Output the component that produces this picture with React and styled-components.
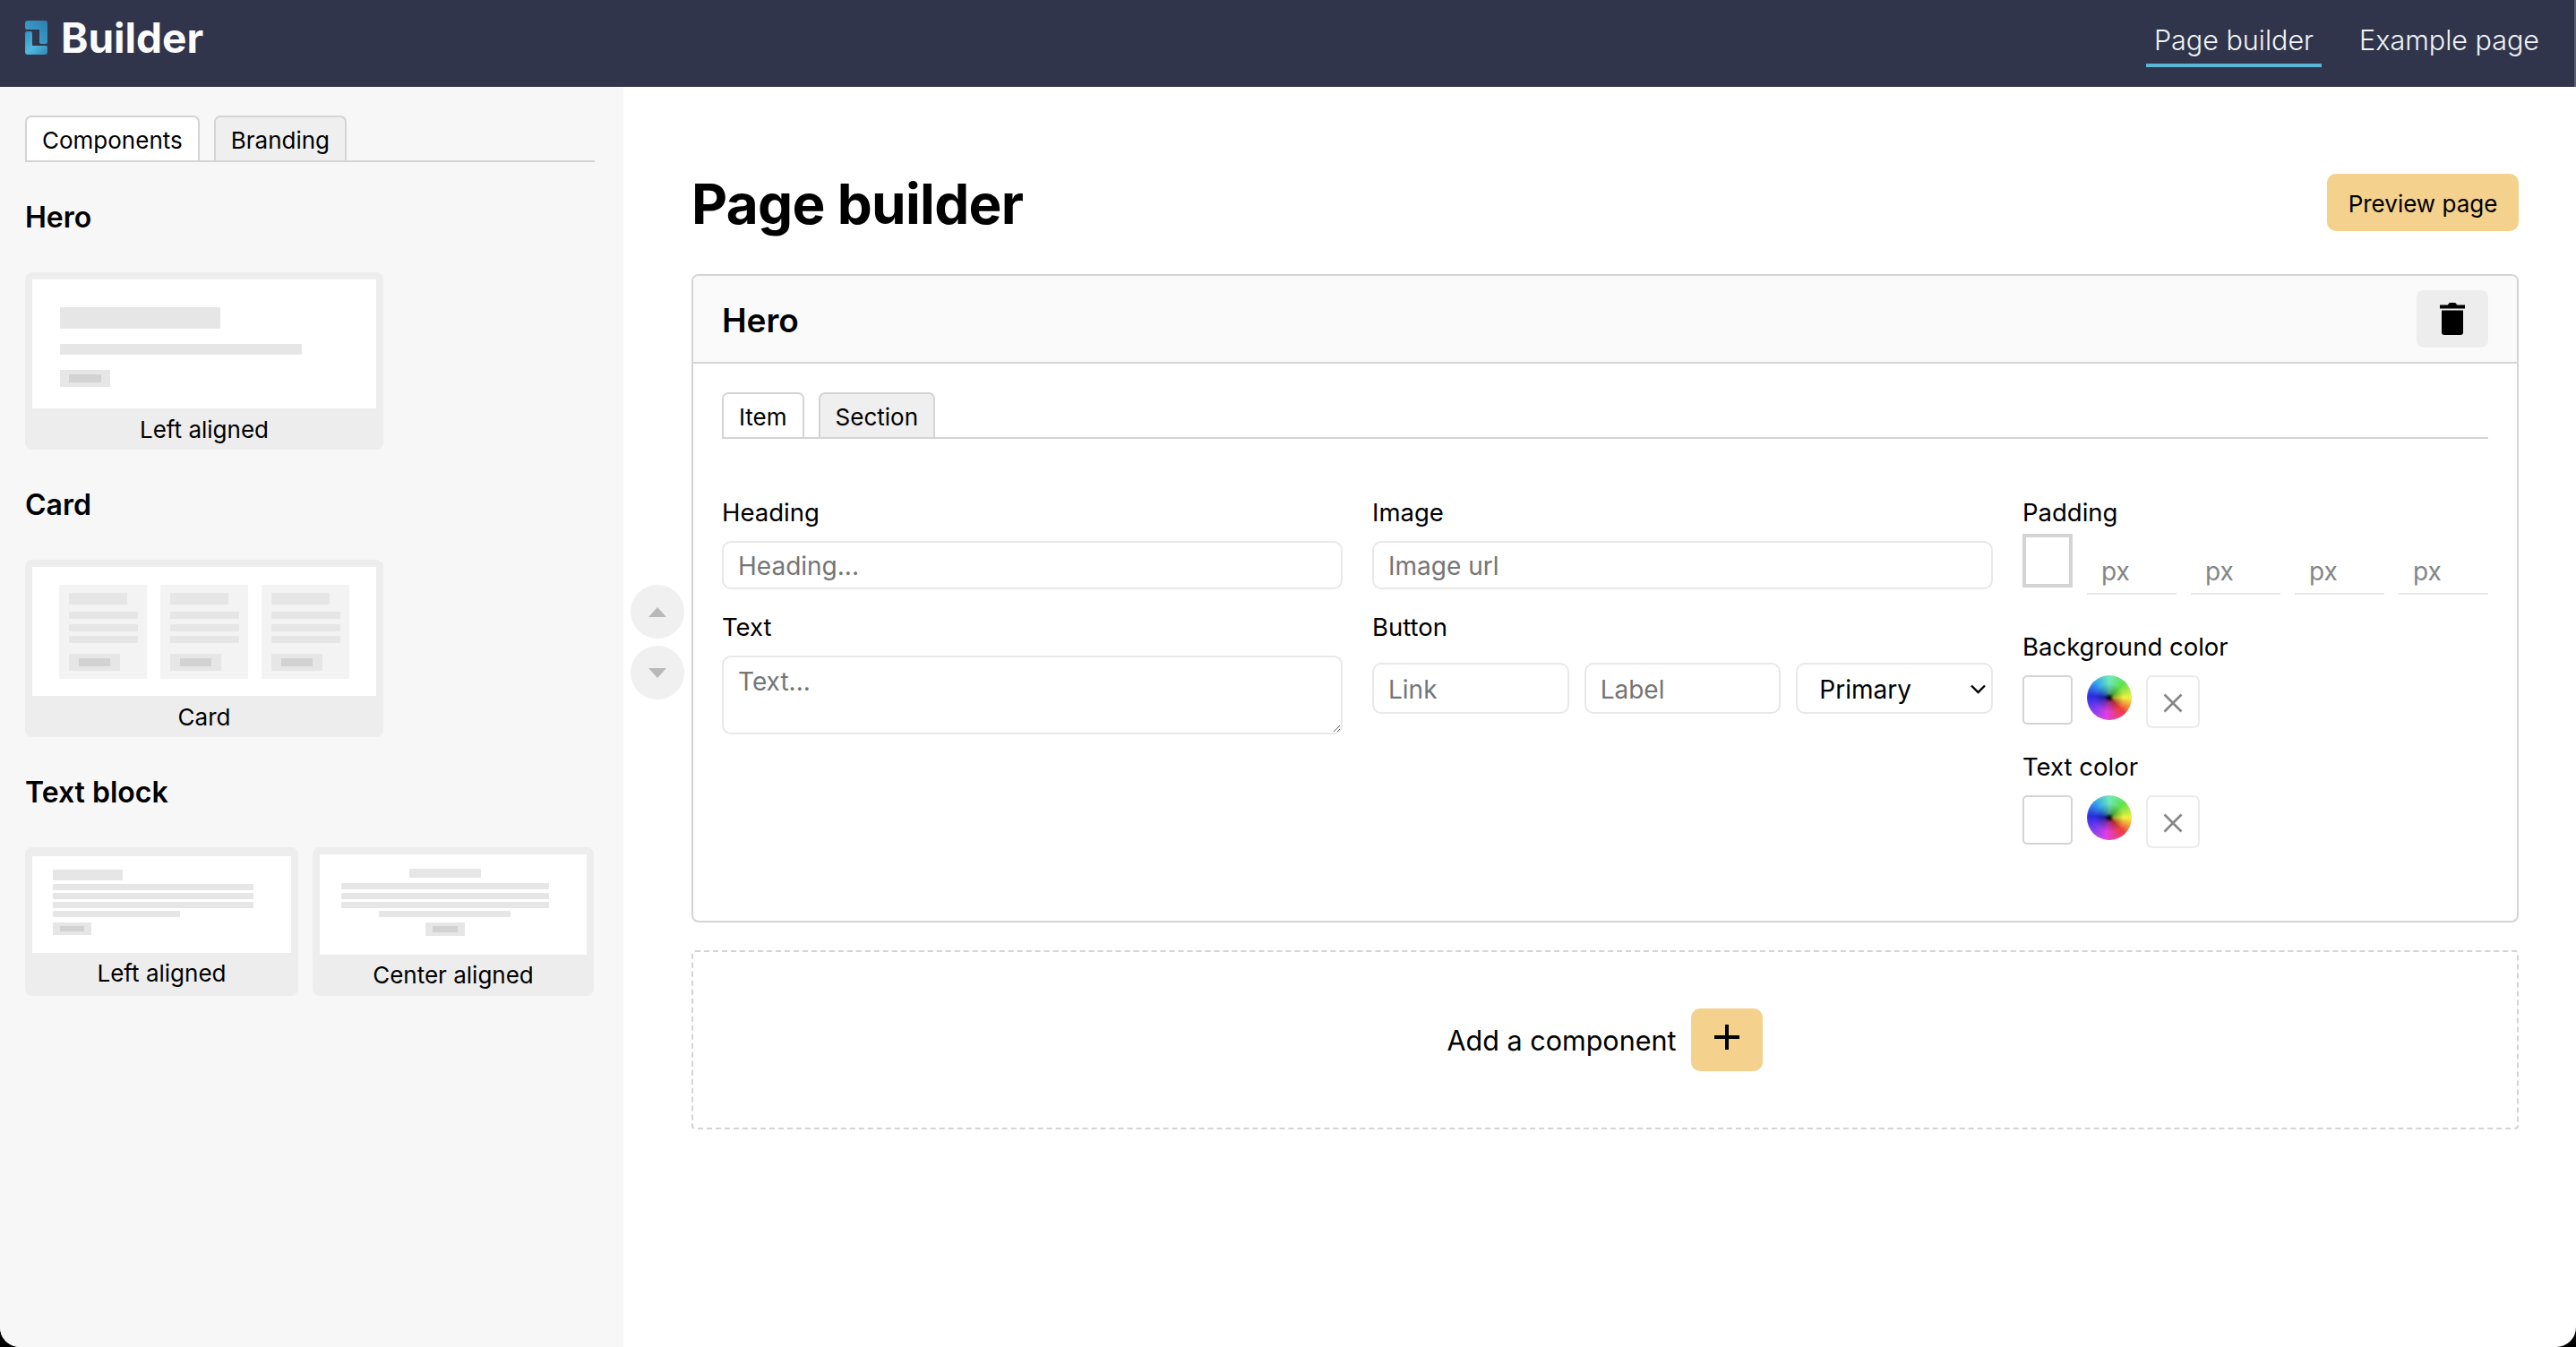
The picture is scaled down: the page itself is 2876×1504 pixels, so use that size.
import React from 'react';
import styled, { createGlobalStyle } from 'styled-components';

const Global = createGlobalStyle`
  html, body { margin: 0; padding: 0; background: #000; height: 100%; overflow: hidden; }
  * { box-sizing: border-box; }
  body { font-family: Inter, "Liberation Sans", sans-serif; font-size: 28px; color: #000; }
`;

const Page = styled.div`
  height: 100vh;
  display: flex;
  flex-direction: column;
  background: #fff;
  border-radius: 0 0 22px 22px;
  overflow: hidden;
`;
const Header = styled.header`
  height: 97px;
  flex: none;
  display: flex;
  justify-content: space-between;
  align-items: flex-start;
  background: #30354b;
  border-right: 2px solid #5c6072;
  padding: 20px 30px 0 28px;
`;
const Brand = styled.div`
  display: flex;
  align-items: center;
  gap: 15px;
  height: 38px;
  margin-top: 3px;
  color: #fbfbfc;
  font-size: 46px;
  font-weight: 700;
  line-height: 38px;
`;
const Nav = styled.nav`
  display: flex;
  gap: 33px;
`;
const NavItem = styled.a`
  height: 55px;
  padding: 0 9px;
  line-height: 50px;
  font-size: 30.5px;
  font-weight: 300;
  color: #f1f5f9;
  border-bottom: 4px solid ${p => (p.$active ? '#5ab7d8' : 'transparent')};
`;
const Body = styled.div`
  flex: 1;
  display: flex;
  min-height: 0;
`;
const Sidebar = styled.aside`
  width: 696px;
  flex: none;
  background: #f7f7f7;
  padding: 32px 32px 0 28px;
`;
const Tabs = styled.div`
  display: flex;
  gap: 16px;
  height: 52px;
  border-bottom: 2px solid #d4d4d4;
`;
const Tab = styled.div`
  height: 50px;
  padding: 2px 17px 0;
  display: flex;
  align-items: center;
  font-size: 26px;
  background: ${p => (p.$active ? '#fff' : '#efefef')};
  border: 2px solid #d4d4d4;
  border-bottom: 0;
  border-radius: 7px 7px 0 0;
`;
const GroupTitle = styled.h3`
  margin: 42px 0 41px;
  font-size: 32px;
  font-weight: 600;
  line-height: 40px;
`;
const CardRow = styled.div`
  display: flex;
  gap: 16px;
`;
const TemplateCard = styled.div`
  width: ${p => p.$w}px;
  height: ${p => p.$h || 198}px;
  flex: none;
  background: #ededed;
  border-radius: 8px;
  padding: ${p => p.$top || 8}px 8px 0;
  display: flex;
  flex-direction: column;
`;
const Preview = styled.div`
  height: ${p => p.$h}px;
  flex: none;
  background: #fff;
  display: flex;
  flex-direction: ${p => (p.$row ? 'row' : 'column')};
  align-items: ${p => (p.$center ? 'center' : 'flex-start')};
  gap: ${p => (p.$row ? '15px' : '0')};
  padding: ${p => p.$pad};
`;
const TemplateLabel = styled.div`
  flex: 1;
  display: flex;
  align-items: center;
  justify-content: center;
  font-size: 26px;
  padding-bottom: ${p => p.$nudge || 0}px;
`;
const Bar = styled.div`
  width: ${p => p.$w}px;
  height: ${p => p.$h}px;
  margin-top: ${p => p.$mt || 0}px;
  flex: none;
  background: #e6e6e6;
  border-radius: 1px;
`;
const SkelButton = styled.div`
  width: ${p => p.$w}px;
  height: ${p => p.$h}px;
  margin-top: ${p => p.$mt || 0}px;
  flex: none;
  background: #e6e6e6;
  display: flex;
  align-items: center;
  justify-content: center;
`;
const SkelInner = styled.div`
  width: ${p => p.$w}px;
  height: ${p => p.$h}px;
  background: #d2d2d2;
`;
const MiniCard = styled.div`
  width: 98px;
  height: 105px;
  background: #f3f3f3;
  padding: 9px 11px 0;
`;
const Main = styled.main`
  flex: 1;
  min-width: 0;
  display: flex;
  gap: 8px;
  padding: 97px 64px 0 8px;
`;
const Mover = styled.div`
  width: 60px;
  flex: none;
  margin-top: 459px;
  display: flex;
  flex-direction: column;
  gap: 8px;
`;
const MoveButton = styled.div`
  width: 60px;
  height: 60px;
  border-radius: 50%;
  background: #f0f0f0;
  display: flex;
  align-items: center;
  justify-content: center;
`;
const Content = styled.div`
  flex: 1;
  min-width: 0;
`;
const TitleRow = styled.div`
  height: 64px;
  margin-bottom: 48px;
  display: flex;
  justify-content: space-between;
  align-items: center;
`;
const Title = styled.h1`
  margin: 3px 0 0 0;
  font-size: 62px;
  line-height: 64px;
  font-weight: 700;
  letter-spacing: -0.7px;
`;
const PreviewButton = styled.div`
  width: 214px;
  height: 64px;
  padding-top: 2px;
  border-radius: 10px;
  background: #f4d28e;
  display: flex;
  align-items: center;
  justify-content: center;
  font-size: 26px;
`;
const Panel = styled.section`
  border: 2px solid #d4d4d4;
  border-radius: 8px;
  overflow: hidden;
`;
const PanelHeader = styled.div`
  height: 98px;
  padding: 0 32px;
  display: flex;
  justify-content: space-between;
  align-items: center;
  background: #fafafa;
  border-bottom: 2px solid #d4d4d4;
`;
const PanelTitle = styled.h2`
  margin: 2px 0 0;
  font-size: 37px;
  font-weight: 600;
`;
const DeleteButton = styled.div`
  width: 80px;
  height: 64px;
  border-radius: 8px;
  background: #ededed;
  display: flex;
  align-items: center;
  justify-content: center;
`;
const PanelBody = styled.div`
  padding: 32px;
`;
const FormGrid = styled.div`
  display: grid;
  grid-template-columns: 1fr 1fr 520px;
  column-gap: 33px;
  padding: 65px 0 49px;
`;
const Column = styled.div`
  display: flex;
  flex-direction: column;
`;
const FieldLabel = styled.label`
  display: block;
  height: 34px;
  line-height: 34px;
  font-size: 27.5px;
  margin-top: ${p => p.$mt || 0}px;
  margin-bottom: 15px;
`;
const TextInput = styled.input`
  width: 100%;
  min-width: 0;
  height: ${p => p.$h || 54}px;
  padding: 2px 16px 0;
  border: 2px solid #e8e8e8;
  border-radius: 10px;
  outline: 0;
  background: #fff;
  font: 400 28px Inter, "Liberation Sans", sans-serif;
  &::placeholder { color: #757575; opacity: 1; }
`;
const TextArea = styled.textarea`
  display: block;
  width: 100%;
  height: 88px;
  padding: 10px 16px;
  border: 2px solid #e8e8e8;
  border-radius: 10px;
  outline: 0;
  resize: vertical;
  font: 400 28px Inter, "Liberation Sans", sans-serif;
  &::placeholder { color: #757575; opacity: 1; }
`;
const ButtonFields = styled.div`
  display: grid;
  grid-template-columns: repeat(3, 1fr);
  gap: 17px;
  margin-top: 8px;
`;
const SelectWrap = styled.div`
  position: relative;
`;
const Select = styled.select`
  appearance: none;
  width: 100%;
  height: 57px;
  padding: 2px 24px 0;
  border: 2px solid #e8e8e8;
  border-radius: 10px;
  background: #fff;
  color: #000;
  font: 400 28px Inter, "Liberation Sans", sans-serif;
`;
const Chevron = styled.svg`
  position: absolute;
  right: 8px;
  top: 24px;
`;
const PaddingRow = styled.div`
  display: flex;
  align-items: flex-end;
  gap: 16px;
  height: 68px;
  margin-top: -8px;
`;
const PaddingBox = styled.div`
  width: 56px;
  height: 60px;
  flex: none;
  margin-bottom: 8px;
  border: 4px solid #d4d4d4;
`;
const PxInput = styled.input`
  flex: 1;
  min-width: 0;
  height: 50px;
  padding: 0 16px;
  border: 0;
  border-bottom: 2px solid #e8e8e8;
  outline: 0;
  background: transparent;
  font: 400 28px Inter, "Liberation Sans", sans-serif;
  &::placeholder { color: #858585; opacity: 1; }
`;
const ColorRow = styled.div`
  display: flex;
  align-items: flex-start;
  gap: 16px;
`;
const Swatch = styled.div`
  width: 56px;
  height: 55px;
  border: 2px solid #d4d4d4;
  border-radius: 5px;
  background: #fff;
`;
const Wheel = styled.div`
  width: 50px;
  height: 50px;
  border-radius: 50%;
  background:
    radial-gradient(circle, #000 0, rgba(0, 0, 0, 0.3) 15%, rgba(0, 0, 0, 0) 45%),
    radial-gradient(circle, rgba(255, 255, 255, 0) 60%, rgba(255, 255, 255, 0.2) 100%),
    conic-gradient(#6fe9b8 0deg, #5fe04a 45deg, #f2f23c 90deg, #ee3c3c 135deg, #e23ee2 190deg, #7a3cf0 235deg, #2a2adf 275deg, #35a8ea 320deg, #6fe9b8 360deg);
`;
const ClearButton = styled.div`
  width: 60px;
  height: 59px;
  border: 2px solid #ebebeb;
  border-radius: 7px;
  display: flex;
  align-items: center;
  justify-content: center;
`;
const AddBox = styled.div`
  height: 200px;
  margin-top: 31px;
  border: 2px dashed #d4d4d4;
  border-radius: 4px;
  display: flex;
  align-items: center;
  justify-content: center;
  gap: 17px;
  font-size: 30.5px;
`;
const AddButton = styled.div`
  width: 80px;
  height: 70px;
  border-radius: 10px;
  background: #f4d28e;
  display: flex;
  justify-content: center;
  padding-top: 17px;
`;

const Logo = () => (
  <svg width="25" height="38" viewBox="0 0 25 38">
    <defs>
      <linearGradient id="lg1" x1="1" y1="0" x2="0" y2="1">
        <stop offset="0" stopColor="#2a7fb0" />
        <stop offset="1" stopColor="#46a9d4" />
      </linearGradient>
      <linearGradient id="lg2" x1="0" y1="0" x2="1" y2="1">
        <stop offset="0" stopColor="#2f8fc0" />
        <stop offset="0.5" stopColor="#52b8dc" />
        <stop offset="1" stopColor="#2f88b8" />
      </linearGradient>
    </defs>
    <path d="M3 0H22a3 3 0 0 1 3 3V24a2 2 0 0 1-2 2H18a2 2 0 0 1-2-2V10H2a2 2 0 0 1-2-2V3a3 3 0 0 1 3-3Z" fill="url(#lg1)" />
    <path d="M2 12H6a2 2 0 0 1 2 2V28H23a2 2 0 0 1 2 2V35a3 3 0 0 1-3 3H3a3 3 0 0 1-3-3V14a2 2 0 0 1 2-2Z" fill="url(#lg2)" />
  </svg>
);
const TrashIcon = () => (
  <svg width="28" height="36" viewBox="0 0 28 36">
    <path d="M9 2.5C9.5 .8 10.5 0 12 0H16C17.5 0 18.5 .8 19 2.5H28V6.5H0V2.5Z" fill="#000" />
    <path d="M2 8.5H26V33a3 3 0 0 1-3 3H5a3 3 0 0 1-3-3Z" fill="#000" />
  </svg>
);
const Triangle = ({ down }) => (
  <svg width="20" height="11" viewBox="0 0 20 11">
    <path d={down ? 'M0 0H20L10 11Z' : 'M10 0L20 11H0Z'} fill="#b9b9b9" />
  </svg>
);
const XIcon = () => (
  <svg width="22" height="22" viewBox="0 0 22 22" style={{ marginTop: 2 }}>
    <path d="M1.5 1.5L20.5 20.5M20.5 1.5L1.5 20.5" stroke="#858585" strokeWidth="2.6" fill="none" />
  </svg>
);
const PlusIcon = () => (
  <svg width="30" height="30" viewBox="0 0 30 30">
    <path d="M15 1V29M1 15H29" stroke="#000" strokeWidth="4" fill="none" />
  </svg>
);

const HeroPreview = () => (
  <Preview $h={144} $pad="31px 0 0 31px">
    <Bar $w={179} $h={24} />
    <Bar $w={270} $h={12} $mt={17} />
    <SkelButton $w={56} $h={19} $mt={17}><SkelInner $w={36} $h={9} /></SkelButton>
  </Preview>
);
const Mini = () => (
  <MiniCard>
    <Bar $w={65} $h={13} />
    <Bar $w={77} $h={8} $mt={8} />
    <Bar $w={77} $h={8} $mt={6} />
    <Bar $w={77} $h={8} $mt={5} />
    <SkelButton $w={57} $h={19} $mt={12}><SkelInner $w={35} $h={9} /></SkelButton>
  </MiniCard>
);
const CardPreview = () => (
  <Preview $h={144} $row $pad="20px 0 0 30px">
    <Mini /><Mini /><Mini />
  </Preview>
);
const TextLeft = () => (
  <Preview $h={108} $pad="15px 0 0 23px">
    <Bar $w={78} $h={12} />
    <Bar $w={224} $h={7} $mt={4} />
    <Bar $w={224} $h={7} $mt={3} />
    <Bar $w={224} $h={7} $mt={3} />
    <Bar $w={142} $h={7} $mt={3} />
    <SkelButton $w={43} $h={14} $mt={6}><SkelInner $w={27} $h={6} /></SkelButton>
  </Preview>
);
const TextCenter = () => (
  <Preview $h={112} $center $pad="16px 19px 0 0">
    <Bar $w={80} $h={10} />
    <Bar $w={232} $h={7} $mt={6} />
    <Bar $w={232} $h={7} $mt={4} />
    <Bar $w={232} $h={7} $mt={3} />
    <Bar $w={147} $h={7} $mt={3} />
    <SkelButton $w={44} $h={15} $mt={6}><SkelInner $w={28} $h={7} /></SkelButton>
  </Preview>
);

const ColorField = ({ label, mt }) => (
  <>
    <FieldLabel $mt={mt}>{label}</FieldLabel>
    <ColorRow>
      <Swatch />
      <Wheel />
      <ClearButton><XIcon /></ClearButton>
    </ColorRow>
  </>
);

export default function App() {
  return (
    <>
      <Global />
      <Page>
        <Header>
          <Brand><Logo />Builder</Brand>
          <Nav>
            <NavItem $active>Page builder</NavItem>
            <NavItem>Example page</NavItem>
          </Nav>
        </Header>
        <Body>
          <Sidebar>
            <Tabs>
              <Tab $active>Components</Tab>
              <Tab>Branding</Tab>
            </Tabs>
            <GroupTitle>Hero</GroupTitle>
            <CardRow>
              <TemplateCard $w={400}>
                <HeroPreview />
                <TemplateLabel>Left aligned</TemplateLabel>
              </TemplateCard>
            </CardRow>
            <GroupTitle>Card</GroupTitle>
            <CardRow>
              <TemplateCard $w={400}>
                <CardPreview />
                <TemplateLabel>Card</TemplateLabel>
              </TemplateCard>
            </CardRow>
            <GroupTitle>Text block</GroupTitle>
            <CardRow>
              <TemplateCard $w={305} $h={166} $top={10}>
                <TextLeft />
                <TemplateLabel $nudge={4}>Left aligned</TemplateLabel>
              </TemplateCard>
              <TemplateCard $w={314} $h={166}>
                <TextCenter />
                <TemplateLabel $nudge={2}>Center aligned</TemplateLabel>
              </TemplateCard>
            </CardRow>
          </Sidebar>
          <Main>
            <Mover>
              <MoveButton><Triangle /></MoveButton>
              <MoveButton><Triangle down /></MoveButton>
            </Mover>
            <Content>
              <TitleRow>
                <Title>Page builder</Title>
                <PreviewButton>Preview page</PreviewButton>
              </TitleRow>
              <Panel>
                <PanelHeader>
                  <PanelTitle>Hero</PanelTitle>
                  <DeleteButton><TrashIcon /></DeleteButton>
                </PanelHeader>
                <PanelBody>
                  <Tabs>
                    <Tab $active>Item</Tab>
                    <Tab>Section</Tab>
                  </Tabs>
                  <FormGrid>
                    <Column>
                      <FieldLabel>Heading</FieldLabel>
                      <TextInput placeholder="Heading..." />
                      <FieldLabel $mt={25}>Text</FieldLabel>
                      <TextArea placeholder="Text..." />
                    </Column>
                    <Column>
                      <FieldLabel>Image</FieldLabel>
                      <TextInput placeholder="Image url" />
                      <FieldLabel $mt={25}>Button</FieldLabel>
                      <ButtonFields>
                        <TextInput $h={57} placeholder="Link" />
                        <TextInput $h={57} placeholder="Label" />
                        <SelectWrap>
                          <Select defaultValue="Primary">
                            <option>Primary</option>
                            <option>Secondary</option>
                          </Select>
                          <Chevron width="17" height="11" viewBox="0 0 17 11">
                            <path d="M1 1.5L8.5 9L16 1.5" stroke="#000" strokeWidth="2.4" fill="none" />
                          </Chevron>
                        </SelectWrap>
                      </ButtonFields>
                    </Column>
                    <Column>
                      <FieldLabel>Padding</FieldLabel>
                      <PaddingRow>
                        <PaddingBox />
                        <PxInput placeholder="px" />
                        <PxInput placeholder="px" />
                        <PxInput placeholder="px" />
                        <PxInput placeholder="px" />
                      </PaddingRow>
                      <ColorField label="Background color" mt={41} />
                      <ColorField label="Text color" mt={26} />
                    </Column>
                  </FormGrid>
                </PanelBody>
              </Panel>
              <AddBox>
                Add a component
                <AddButton><PlusIcon /></AddButton>
              </AddBox>
            </Content>
          </Main>
        </Body>
      </Page>
    </>
  );
}
